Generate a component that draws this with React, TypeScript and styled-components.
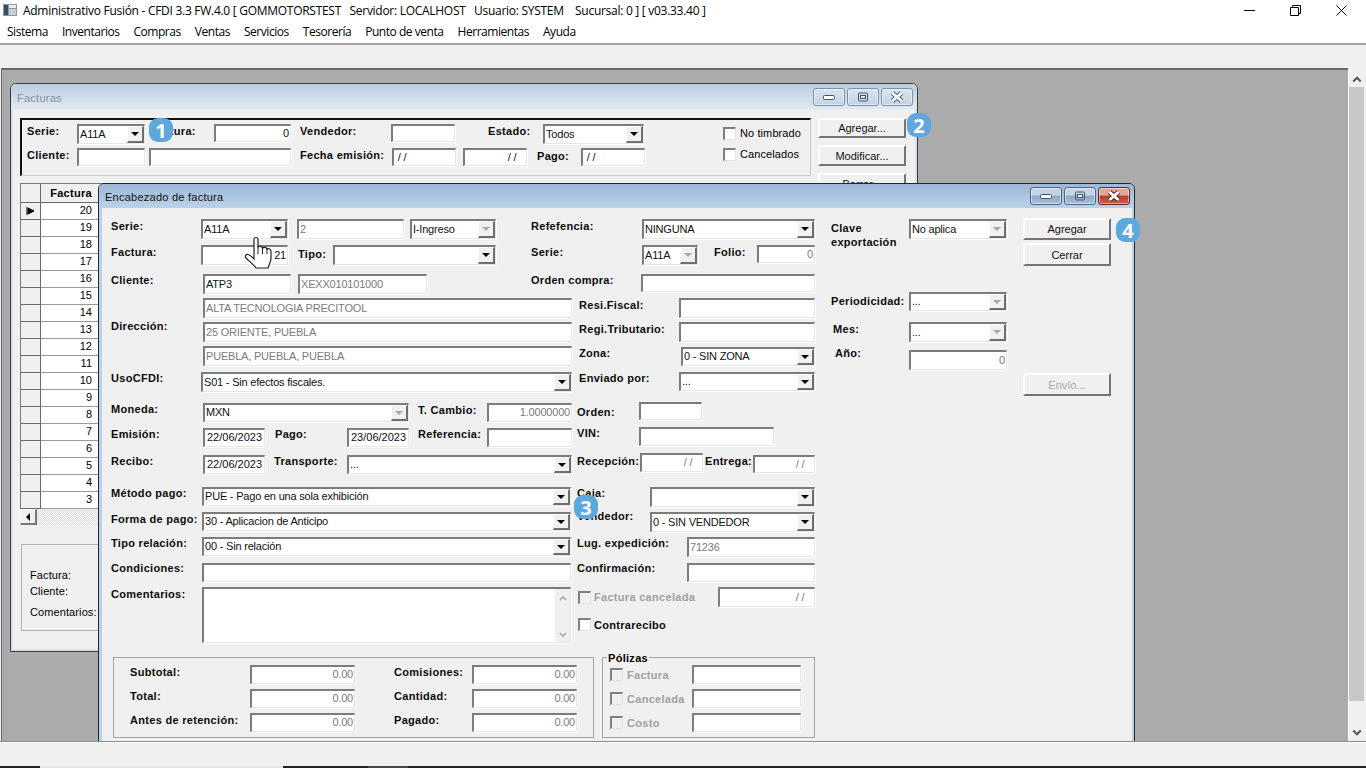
import React from "react";
import styled, { createGlobalStyle } from "styled-components";

const Global = createGlobalStyle`
  html, body { margin: 0; padding: 0; overflow: hidden; background: #f0f0f0; }
  * { box-sizing: border-box; }
`;

const Screen = styled.div`
  position: relative;
  width: 1366px;
  height: 768px;
  display: flex;
  flex-direction: column;
  overflow: hidden;
  background: #f0f0f0;
  font-family: "Liberation Sans", Arial, sans-serif;
  color: #000;
`;

const AppTitle = styled.div`
  height: 22px;
  flex: none;
  background: #fff;
  display: flex;
  align-items: center;
  padding: 0 2px 2px 3px;
  font: 12px "Open Sans", sans-serif;
  white-space: pre;
`;

const AppTitleText = styled.span`
  margin-left: 6px;
  flex: 1;
  letter-spacing: -0.28px;
`;

const SysButton = styled.div`
  width: 46px;
  display: flex;
  justify-content: center;
`;

const MenuBar = styled.div`
  height: 21px;
  flex: none;
  background: #fff;
  display: flex;
  gap: 14px;
  padding: 1px 0 0 7px;
  font: 12px "Open Sans", sans-serif;
  letter-spacing: -0.46px;
`;

const ToolBand = styled.div`
  height: 25px;
  flex: none;
  background: #f0f0f0;
  border-top: 2px solid #a3a3a3;
`;

const Main = styled.div`
  flex: 1;
  display: flex;
  min-height: 0;
`;

const Workspace = styled.div`
  position: relative;
  flex: 1;
  margin-left: 1px;
  border-top: 2px solid #696969;
  border-left: 1px solid #696969;
  background: #ababab;
  overflow: hidden;
`;

const VScroll = styled.div`
  width: 18px;
  flex: none;
  padding: 0 2px 0 1px;
  border-top: 2px solid #f0f0f0;
  display: flex;
  flex-direction: column;
  align-items: stretch;
  background: #f0f0f0;
  box-shadow: inset 1px 0 0 #fff;
`;

const VScrollArrow = styled.div<{ $end?: boolean }>`
  height: 17px;
  margin-top: ${(p) => (p.$end ? "auto" : "0")};
  display: flex;
  align-items: center;
  justify-content: center;
  color: #555;
`;

const VScrollThumb = styled.div`
  height: 614px;
  background: #c8c8c8;
`;

const StatusBar = styled.div`
  height: 25px;
  flex: none;
  background: #f0f0f0;
  border-top: 1px solid #8c8c8c;
  box-shadow: inset 0 1px 0 #fff;
`;

const TaskStrip = styled.div`
  height: 2px;
  flex: none;
  display: flex;
  background: #222;
`;

const TaskSegment = styled.div<{ $w: number; $c: string }>`
  width: ${(p) => p.$w}px;
  background: ${(p) => p.$c};
`;

/* ventanas MDI: sobre el area de trabajo */
const Win = styled.div<{ $x: number; $y: number; $w: number; $h: number; $active?: boolean }>`
  position: absolute;
  left: ${(p) => p.$x}px;
  top: ${(p) => p.$y}px;
  width: ${(p) => p.$w}px;
  height: ${(p) => p.$h}px;
  border: 1px solid ${(p) => (p.$active ? "#1d2a38" : "#3c3c3c")};
  border-radius: 6px 6px 0 0;
  padding: 0 2px 2px ${(p) => (p.$active ? 3 : 2)}px;
  display: flex;
  flex-direction: column;
  background: ${(p) => (p.$active ? "#b9d1e8" : "#d3e1ef")};
`;

const WinTitle = styled.div<{ $active?: boolean }>`
  height: ${(p) => (p.$active ? 24 : 25)}px;
  flex: none;
  margin: 0 -2px 0 ${(p) => (p.$active ? -3 : -2)}px;
  padding: 0 4px 0 6px;
  border-radius: 5px 5px 0 0;
  display: flex;
  align-items: center;
  font-size: 11px;
  letter-spacing: 0.25px;
  color: ${(p) => (p.$active ? "#111" : "#8b9199")};
  background: ${(p) =>
    p.$active
      ? "linear-gradient(#9db8d6, #bad1e8)"
      : "linear-gradient(#bccddf, #dfe9f3)"};
`;

const WinTitleText = styled.span`
  flex: 1;
  margin-top: 2px;
`;

const CaptionGroup = styled.div`
  display: flex;
  gap: 2px;
`;

const CaptionBtn = styled.div<{ $kind: "plain" | "plainActive" | "closeActive" }>`
  width: 32px;
  height: 18px;
  border: 1px solid ${(p) => (p.$kind === "plain" ? "#7f91a8" : p.$kind === "plainActive" ? "#52657f" : "#6e2a22")};
  border-radius: 3px;
  box-shadow: inset 0 0 0 1px rgba(255, 255, 255, 0.45);
  display: flex;
  align-items: center;
  justify-content: center;
  background: ${(p) =>
    p.$kind === "plain"
      ? "linear-gradient(#d9e4f0, #c3d2e3)"
      : p.$kind === "plainActive"
      ? "linear-gradient(#c3d4e6 0 45%, #8fa9c6 50%, #a8c0da)"
      : "linear-gradient(#dca99d 0 45%, #b73d2b 50%, #c5604d)"};
`;

const WinClient = styled.div<{ $pad: string }>`
  flex: 1;
  min-height: 0;
  background: #f0f0f0;
  padding: ${(p) => p.$pad};
  overflow: hidden;
`;

/* controles */
const Lbl = styled.span<{ $w?: number; $ml?: number; $dy?: number; $off?: boolean }>`
  flex: none;
  display: block;
  width: ${(p) => (p.$w ? `${p.$w}px` : "auto")};
  margin-left: ${(p) => p.$ml ?? 0}px;
  margin-top: ${(p) => p.$dy ?? 0}px;
  font-size: 11px;
  font-weight: bold;
  line-height: 14px;
  letter-spacing: 0.3px;
  white-space: pre;
  color: ${(p) => (p.$off ? "#a0a0a0" : "#0c0c0c")};
`;

const Plain = styled.span<{ $dy?: number; $ml?: number }>`
  display: block;
  margin-left: ${(p) => p.$ml ?? 0}px;
  margin-top: ${(p) => p.$dy ?? 0}px;
  font-size: 11px;
  line-height: 14px;
  letter-spacing: 0.1px;
  white-space: nowrap;
`;

const Field = styled.div<{ $w: number; $h?: number; $ml?: number; $right?: boolean; $dim?: boolean; $dy?: number; $date?: boolean }>`
  flex: none;
  width: ${(p) => p.$w}px;
  height: ${(p) => p.$h ?? 19}px;
  margin-left: ${(p) => p.$ml ?? 0}px;
  margin-top: ${(p) => p.$dy ?? 0}px;
  background: #fff;
  border-top: 2px solid #7c7c7c;
  border-left: 2px solid #7c7c7c;
  border-right: 1px solid #e6e6e6;
  border-bottom: 1px solid #e6e6e6;
  box-shadow: 1px 1px 0 #fff;
  padding: 0 ${(p) => (p.$date ? 0 : 1)}px 2px ${(p) => (p.$date ? 2 : 1)}px;
  overflow: hidden;
  display: flex;
  align-items: center;
  justify-content: ${(p) => (p.$right ? "flex-end" : "flex-start")};
  font-size: 11px;
  letter-spacing: ${(p) => (p.$date ? 0 : -0.2)}px;
  white-space: nowrap;
  color: ${(p) => (p.$dim ? "#7b7b7b" : "#111")};
`;

const ComboText = styled.span`
  flex: 1;
  overflow: hidden;
`;

const ComboBtn = styled.span<{ $off?: boolean }>`
  flex: none;
  width: 17px;
  align-self: stretch;
  margin: 0 -1px -2px 0;
  background: #f0f0f0;
  border-top: 1px solid #fff;
  border-left: 1px solid #fff;
  border-right: 2px solid #6f6f6f;
  border-bottom: 2px solid #6f6f6f;
  display: flex;
  align-items: center;
  justify-content: center;
  &::after {
    content: "";
    border-style: solid;
    border-width: 4px 4px 0;
    border-color: ${(p) => (p.$off ? "#a8a8a8" : "#000")} transparent transparent;
  }
`;

type ComboProps = { w: number; h?: number; ml?: number; off?: boolean; dy?: number; children?: React.ReactNode };

const Combo = ({ w, h, ml, off, dy, children }: ComboProps) => (
  <Field $w={w} $h={h ?? 20} $ml={ml} $dy={dy}>
    <ComboText>{children}</ComboText>
    <ComboBtn $off={off} />
  </Field>
);

const Btn = styled.div<{ $h: number; $mt?: number; $off?: boolean }>`
  width: 88px;
  height: ${(p) => p.$h}px;
  margin-top: ${(p) => p.$mt ?? 0}px;
  flex: none;
  background: #f0f0f0;
  border-top: 2px solid #fff;
  border-left: 2px solid #fff;
  border-right: 2px solid #747474;
  border-bottom: 2px solid #747474;
  display: flex;
  align-items: center;
  justify-content: center;
  font-size: 11px;
  color: ${(p) => (p.$off ? "#a6a6a6" : "#111")};
`;

const Check = styled.span<{ $off?: boolean; $ml?: number; $dy?: number }>`
  flex: none;
  width: 13px;
  height: 13px;
  margin-left: ${(p) => p.$ml ?? 0}px;
  margin-top: ${(p) => p.$dy ?? 0}px;
  background: ${(p) => (p.$off ? "#f0f0f0" : "#fff")};
  border-top: 2px solid #808080;
  border-left: 2px solid #808080;
  border-right: 1px solid #e4e4e4;
  border-bottom: 1px solid #e4e4e4;
`;

const Row = styled.div<{ $mt?: number }>`
  display: flex;
  align-items: flex-start;
  margin-top: ${(p) => p.$mt ?? 0}px;
`;

const Col = styled.div<{ $w?: number; $ml?: number; $mt?: number; $gap?: number }>`
  display: flex;
  flex-direction: column;
  flex: none;
  width: ${(p) => (p.$w ? `${p.$w}px` : "auto")};
  margin-left: ${(p) => p.$ml ?? 0}px;
  margin-top: ${(p) => p.$mt ?? 0}px;
  gap: ${(p) => p.$gap ?? 0}px;
`;

/* Facturas */
const FacturasTop = styled.div`
  display: flex;
  align-items: flex-start;
  height: 58px;
`;

const FilterPanel = styled.div`
  width: 791px;
  height: 58px;
  flex: none;
  display: flex;
  padding: 4px 0 0 5px;
  border-top: 2px solid #111;
  border-left: 2px solid #111;
  border-right: 1px solid #c8c8c8;
  border-bottom: 1px solid #c8c8c8;
`;

const CheckRow = styled.div<{ $mt?: number }>`
  display: flex;
  align-items: center;
  gap: 4px;
  margin-top: ${(p) => p.$mt ?? 0}px;
`;

const DataGrid = styled.div`
  margin-top: 7px;
  width: 90px;
  border-top: 1px solid #7a7a7a;
  border-left: 1px solid #7a7a7a;
`;

const GridRow = styled.div`
  display: flex;
  height: 17px;
`;

const GridHeadRow = styled(GridRow)`
  height: 19px;
`;

const SelectorCell = styled.div`
  width: 20px;
  flex: none;
  background: #f0f0f0;
  border-right: 1px solid #6a6a6a;
  border-bottom: 1px solid #6a6a6a;
  display: flex;
  align-items: center;
  justify-content: center;
`;

const HeadCell = styled.div`
  flex: 1;
  background: #f0f0f0;
  border-bottom: 1px solid #6a6a6a;
  padding-right: 18px;
  text-align: right;
  font-size: 11px;
  font-weight: bold;
  line-height: 18px;
  letter-spacing: 0.3px;
`;

const NumCell = styled.div`
  flex: 1;
  background: #fff;
  border-bottom: 1px solid #9a9a9a;
  padding-right: 18px;
  text-align: right;
  font-size: 11px;
  line-height: 15px;
`;

const GridScroll = styled.div`
  height: 16px;
  display: flex;
  width: 90px;
  background: repeating-conic-gradient(#f4f4f4 0 25%, #dfdfdf 0 50%) 0 0 / 2px 2px;
`;

const GridArrow = styled.div`
  width: 17px;
  background: #f0f0f0;
  border-right: 2px solid #777;
  border-bottom: 2px solid #777;
  border-top: 1px solid #fff;
  border-left: 1px solid #fff;
  display: flex;
  align-items: center;
  justify-content: center;
  &::after {
    content: "";
    border-style: solid;
    border-width: 4px 4px 4px 0;
    border-color: transparent #000 transparent transparent;
  }
`;

const DetailPanel = styled.div`
  margin: 19px 0 0 1px;
  width: 400px;
  height: 87px;
  padding: 23px 0 0 8px;
  border: 1px solid #b4b4b4;
`;

/* Encabezado */
const TwoCols = styled.div<{ $mt?: number }>`
  display: flex;
  align-items: flex-start;
  margin-top: ${(p) => p.$mt ?? 0}px;
`;

const MemoScroll = styled.span`
  align-self: stretch;
  width: 15px;
  margin: 0 -1px -2px auto;
  background: #f0f0f0;
  display: flex;
  flex-direction: column;
  justify-content: space-between;
  align-items: center;
  padding: 5px 0 3px;
  color: #a8a8a8;
`;

const TotalsPanel = styled.div`
  width: 481px;
  height: 81px;
  margin-left: 2px;
  padding: 7px 0 0 16px;
  border: 1px solid #a4a4a4;
  flex: none;
`;

const PolizasPanel = styled.div`
  position: relative;
  width: 213px;
  height: 81px;
  margin-left: 8px;
  padding: 7px 0 0 7px;
  border: 1px solid #a4a4a4;
  flex: none;
`;

const PolizasLegend = styled.span`
  position: absolute;
  left: 4px;
  top: -7px;
  padding: 0 1px;
  background: #f0f0f0;
  font-size: 11px;
  line-height: 14px;
  font-weight: bold;
  letter-spacing: 0.3px;
`;

/* marcadores del tutorial y puntero */
const Badge = styled.div<{ $x: number; $y: number }>`
  position: absolute;
  left: ${(p) => p.$x}px;
  top: ${(p) => p.$y}px;
  width: 24px;
  height: 24px;
  border-radius: 9px;
  background: #5fa8dd;
  color: #fff;
  display: flex;
  align-items: center;
  justify-content: center;
  font: bold 20px "Open Sans", sans-serif;
`;

const HandCursor = styled.svg`
  position: absolute;
  left: 244px;
  top: 236px;
`;

const Chevron = ({ up, size = 8 }: { up?: boolean; size?: number }) => (
  <svg width={size} height={size} viewBox="0 0 8 8">
    <path d={up ? "M1 6 L4 3 L7 6" : "M1 2 L4 5 L7 2"} fill="none" stroke="currentColor" strokeWidth="1.6" />
  </svg>
);

const MinGlyph = () => (
  <svg width="14" height="8" viewBox="0 0 14 8">
    <rect x="1.5" y="2.5" width="11" height="4" rx="1" fill="#fff" stroke="#48566a" />
  </svg>
);

const MaxGlyph = () => (
  <svg width="12" height="10" viewBox="0 0 12 10">
    <rect x="1.5" y="1" width="9" height="8" rx="1" fill="none" stroke="#48566a" strokeWidth="1" />
    <rect x="3.5" y="3.5" width="5" height="3" fill="#eef3f9" stroke="#48566a" strokeWidth="1" />
  </svg>
);

const CloseGlyph = ({ tone }: { tone: string }) => (
  <svg width="16" height="12" viewBox="0 0 16 12">
    <path d="M3.5 2 L12.5 10 M12.5 2 L3.5 10" stroke={tone} strokeWidth="5" />
    <path d="M3.5 2 L12.5 10 M12.5 2 L3.5 10" stroke="#fff" strokeWidth="3" />
  </svg>
);

const Caption = ({ active }: { active?: boolean }) => (
  <CaptionGroup>
    <CaptionBtn $kind={active ? "plainActive" : "plain"}><MinGlyph /></CaptionBtn>
    <CaptionBtn $kind={active ? "plainActive" : "plain"}><MaxGlyph /></CaptionBtn>
    <CaptionBtn $kind={active ? "closeActive" : "plain"}><CloseGlyph tone={active ? "#5a1e16" : "#53627a"} /></CaptionBtn>
  </CaptionGroup>
);

const facturas = [20, 19, 18, 17, 16, 15, 14, 13, 12, 11, 10, 9, 8, 7, 6, 5, 4, 3];

const FacturasWindow = () => (
  <Win $x={8} $y={13} $w={908} $h={569}>
    <WinTitle>
      <WinTitleText>Facturas</WinTitleText>
      <Caption />
    </WinTitle>
    <WinClient $pad="9px 0 0 7px">
      <FacturasTop>
        <FilterPanel>
          <Col>
            <Row>
              <Lbl $w={50}>Serie:</Lbl>
              <Combo w={68}>A11A</Combo>
              <Lbl $w={64} $ml={5}>Factura:</Lbl>
              <Field $w={77} $h={18} $right>0</Field>
              <Lbl $w={91} $ml={9}>Vendedor:</Lbl>
              <Field $w={64} $h={18} />
              <Lbl $w={55} $ml={33}>Estado:</Lbl>
              <Combo w={101}>Todos</Combo>
            </Row>
            <Row $mt={4}>
              <Lbl $w={50}>Cliente:</Lbl>
              <Field $w={68} $h={18} />
              <Field $w={142} $h={18} $ml={4} />
              <Lbl $w={92} $ml={9}>Fecha emisión:</Lbl>
              <Field $w={64} $h={18}>&nbsp;/ /</Field>
              <Field $w={64} $h={18} $ml={7} $right>/ /&nbsp;&nbsp;&nbsp;</Field>
              <Lbl $w={44} $ml={10} $dy={1}>Pago:</Lbl>
              <Field $w={64} $h={18}>&nbsp;/ /</Field>
            </Row>
          </Col>
          <Col $ml={78} $mt={2}>
            <CheckRow>
              <Check />
              <Plain>No timbrado</Plain>
            </CheckRow>
            <CheckRow $mt={7}>
              <Check />
              <Plain>Cancelados</Plain>
            </CheckRow>
          </Col>
        </FilterPanel>
        <Col $ml={7} $gap={7}>
          <Btn $h={20}>Agregar...</Btn>
          <Btn $h={21}>Modificar...</Btn>
          <Btn $h={21}>Borrar...</Btn>
        </Col>
      </FacturasTop>
      <DataGrid>
        <GridHeadRow>
          <SelectorCell />
          <HeadCell>Factura</HeadCell>
        </GridHeadRow>
        {facturas.map((n, i) => (
          <GridRow key={n}>
            <SelectorCell>
              {i === 0 && (
                <svg width="10" height="8" viewBox="0 0 10 8">
                  <path d="M1 0 V8 M2 1 L8 4 L2 7 Z" stroke="#000" fill="#000" />
                </svg>
              )}
            </SelectorCell>
            <NumCell>{n}</NumCell>
          </GridRow>
        ))}
      </DataGrid>
      <GridScroll>
        <GridArrow />
      </GridScroll>
      <DetailPanel>
        <Plain>Factura:</Plain>
        <Plain $dy={2}>Cliente:</Plain>
        <Plain $dy={7}>Comentarios:</Plain>
      </DetailPanel>
    </WinClient>
  </Win>
);

const EncabezadoWindow = () => (
  <Win $x={96} $y={113} $w={1037} $h={600} $active>
    <WinTitle $active>
      <WinTitleText>Encabezado de factura</WinTitleText>
      <Caption active />
    </WinTitle>
    <WinClient $pad="11px 0 0 9px">
      <Row>
        <Col $w={704}>
          <TwoCols>
            <Col $w={420}>
              <Row>
                <Lbl $w={90}>Serie:</Lbl>
                <Combo w={87}>A11A</Combo>
                <Field $w={107} $h={20} $ml={9} $dim>2</Field>
                <Combo w={86} ml={6} off>I-Ingreso</Combo>
              </Row>
              <Row $mt={6}>
                <Lbl $w={90}>Factura:</Lbl>
                <Field $w={87} $h={20} $right>21</Field>
                <Lbl $w={35} $ml={10} $dy={2}>Tipo:</Lbl>
                <Combo w={163}></Combo>
              </Row>
              <Row $mt={9}>
                <Lbl $w={92} $dy={-1}>Cliente:</Lbl>
                <Field $w={88} $h={20}>ATP3</Field>
                <Field $w={129} $h={20} $ml={7} $dim>XEXX010101000</Field>
              </Row>
            </Col>
            <Col $w={284}>
              <Row>
                <Lbl $w={111}>Refefencia:</Lbl>
                <Combo w={173}>NINGUNA</Combo>
              </Row>
              <Row $mt={6}>
                <Lbl $w={111}>Serie:</Lbl>
                <Combo w={56} off>A11A</Combo>
                <Lbl $w={43} $ml={16}>Folio:</Lbl>
                <Field $w={58} $h={18} $right $dim>0</Field>
              </Row>
              <Row $mt={9}>
                <Lbl $w={110} $dy={-1}>Orden compra:</Lbl>
                <Field $w={174} $h={18} />
              </Row>
            </Col>
          </TwoCols>
          <TwoCols $mt={4}>
            <Col $w={461}>
              <Row>
                <Lbl $w={92} $dy={21}>Dirección:</Lbl>
                <Col $gap={4}>
                  <Field $w={369} $h={20} $dim>ALTA TECNOLOGIA PRECITOOL</Field>
                  <Field $w={369} $h={20} $dim>25 ORIENTE, PUEBLA</Field>
                  <Field $w={369} $h={20} $dim>PUEBLA, PUEBLA, PUEBLA</Field>
                </Col>
              </Row>
              <Row $mt={6}>
                <Lbl $w={90} $dy={-1}>UsoCFDI:</Lbl>
                <Combo w={371}>S01 - Sin efectos fiscales.</Combo>
              </Row>
              <Row $mt={11}>
                <Lbl $w={92} $dy={-1}>Moneda:</Lbl>
                <Combo w={206} h={19} off>MXN</Combo>
                <Lbl $w={69} $ml={9}>T. Cambio:</Lbl>
                <Field $w={85} $right $dim>1.0000000</Field>
              </Row>
              <Row $mt={6}>
                <Lbl $w={92} $dy={-1}>Emisión:</Lbl>
                <Field $w={62} $date>22/06/2023</Field>
                <Lbl $w={72} $ml={10} $dy={-1}>Pago:</Lbl>
                <Field $w={62} $date>23/06/2023</Field>
                <Lbl $w={69} $ml={9} $dy={-1}>Referencia:</Lbl>
                <Field $w={85} />
              </Row>
              <Row $mt={8}>
                <Lbl $w={92} $dy={-1}>Recibo:</Lbl>
                <Field $w={62} $date>22/06/2023</Field>
                <Lbl $w={73} $ml={9} $dy={-1}>Transporte:</Lbl>
                <Combo w={225} h={19}>...</Combo>
              </Row>
              <Row $mt={13}>
                <Lbl $w={91} $dy={-1}>Método pago:</Lbl>
                <Combo w={369} h={19}>PUE - Pago en una sola exhibición</Combo>
              </Row>
              <Row $mt={6}>
                <Lbl $w={91}>Forma de pago:</Lbl>
                <Combo w={369} h={19}>30 - Aplicacion de Anticipo</Combo>
              </Row>
              <Row $mt={6}>
                <Lbl $w={91} $dy={-1}>Tipo relación:</Lbl>
                <Combo w={369} h={19}>00 - Sin relación</Combo>
              </Row>
              <Row $mt={7}>
                <Lbl $w={91} $dy={-2}>Condiciones:</Lbl>
                <Field $w={369} />
              </Row>
              <Row $mt={5}>
                <Lbl $w={91}>Comentarios:</Lbl>
                <Field $w={369} $h={56}>
                  <MemoScroll>
                    <Chevron up />
                    <Chevron />
                  </MemoScroll>
                </Field>
              </Row>
            </Col>
            <Col $w={238} $ml={5}>
              <Row>
                <Lbl $w={100} $ml={2}>Resi.Fiscal:</Lbl>
                <Field $w={136} $h={20} />
              </Row>
              <Row $mt={4}>
                <Lbl $w={100} $ml={2}>Regi.Tributario:</Lbl>
                <Field $w={136} $h={20} />
              </Row>
              <Row $mt={5}>
                <Lbl $w={102} $ml={2} $dy={-1}>Zona:</Lbl>
                <Combo w={134} h={19}>0 - SIN ZONA</Combo>
              </Row>
              <Row $mt={6}>
                <Lbl $w={100} $ml={2} $dy={-1}>Enviado por:</Lbl>
                <Combo w={136} h={19}>...</Combo>
              </Row>
              <Row $mt={11}>
                <Lbl $w={62} $dy={3}>Orden:</Lbl>
                <Field $w={63} $h={18} />
              </Row>
              <Row $mt={7}>
                <Lbl $w={62} $dy={-1}>VIN:</Lbl>
                <Field $w={135} />
              </Row>
              <Row $mt={7}>
                <Lbl $w={63} $dy={1}>Recepción:</Lbl>
                <Field $w={63} $right $dim>/ /&nbsp;&nbsp;&nbsp;</Field>
                <Lbl $w={48} $ml={2} $dy={1}>Entrega:</Lbl>
                <Field $w={62} $h={18} $dy={2} $right $dim>/ /&nbsp;&nbsp;&nbsp;</Field>
              </Row>
              <Row $mt={14}>
                <Lbl $w={73} $dy={-1}>Caja:</Lbl>
                <Combo w={165}></Combo>
              </Row>
              <Row $mt={5}>
                <Lbl $w={73} $dy={-3}>Vendedor:</Lbl>
                <Combo w={165}>0 - SIN VENDEDOR</Combo>
              </Row>
              <Row $mt={5}>
                <Lbl $w={110} $dy={-1}>Lug. expedición:</Lbl>
                <Field $w={128} $h={20} $dim>71236</Field>
              </Row>
              <Row $mt={6}>
                <Lbl $w={110} $dy={-2}>Confirmación:</Lbl>
                <Field $w={128} />
              </Row>
              <Row $mt={5}>
                <Check $off $ml={1} $dy={4} />
                <Lbl $w={124} $ml={3} $dy={3} $off>Factura cancelada</Lbl>
                <Field $w={97} $h={20} $right $dim>/ /&nbsp;&nbsp;&nbsp;</Field>
              </Row>
              <Row $mt={11}>
                <Check $ml={1} />
                <Lbl $ml={3}>Contrarecibo</Lbl>
              </Row>
            </Col>
          </TwoCols>
          <TwoCols $mt={14}>
            <TotalsPanel>
              <Row>
                <Lbl $w={120}>Subtotal:</Lbl>
                <Field $w={105} $right $dim>0.00</Field>
                <Lbl $w={78} $ml={39}>Comisiones:</Lbl>
                <Field $w={105} $right $dim>0.00</Field>
              </Row>
              <Row $mt={5}>
                <Lbl $w={120}>Total:</Lbl>
                <Field $w={105} $right $dim>0.00</Field>
                <Lbl $w={78} $ml={39}>Cantidad:</Lbl>
                <Field $w={105} $right $dim>0.00</Field>
              </Row>
              <Row $mt={5}>
                <Lbl $w={120}>Antes de retención:</Lbl>
                <Field $w={105} $right $dim>0.00</Field>
                <Lbl $w={78} $ml={39}>Pagado:</Lbl>
                <Field $w={105} $right $dim>0.00</Field>
              </Row>
            </TotalsPanel>
            <PolizasPanel>
              <PolizasLegend>Pólizas</PolizasLegend>
              <Row>
                <Check $off $dy={3} />
                <Lbl $w={65} $ml={4} $dy={3} $off>Factura</Lbl>
                <Field $w={109} />
              </Row>
              <Row $mt={5}>
                <Check $off $dy={3} />
                <Lbl $w={65} $ml={4} $dy={3} $off>Cancelada</Lbl>
                <Field $w={109} />
              </Row>
              <Row $mt={5}>
                <Check $off $dy={3} />
                <Lbl $w={65} $ml={4} $dy={3} $off>Costo</Lbl>
                <Field $w={109} />
              </Row>
            </PolizasPanel>
          </TwoCols>
        </Col>
        <Col $w={176} $ml={16}>
          <Row>
            <Lbl $w={78} $dy={2}>{"Clave\nexportación"}</Lbl>
            <Combo w={98} off>No aplica</Combo>
          </Row>
          <Row $mt={43}>
            <Lbl $w={78} $dy={2}>Periodicidad:</Lbl>
            <Combo w={98} h={19} off>...</Combo>
          </Row>
          <Row $mt={11}>
            <Lbl $w={76} $ml={2}>Mes:</Lbl>
            <Combo w={98} off>...</Combo>
          </Row>
          <Row $mt={8}>
            <Lbl $w={74} $ml={4} $dy={-4}>Año:</Lbl>
            <Field $w={98} $h={20} $right $dim>0</Field>
          </Row>
        </Col>
        <Col $ml={16} $mt={-1}>
          <Btn $h={22}>Agregar</Btn>
          <Btn $h={23} $mt={3}>Cerrar</Btn>
          <Btn $h={23} $mt={107} $off>Envío...</Btn>
        </Col>
      </Row>
    </WinClient>
  </Win>
);

export default function App() {
  return (
    <Screen>
      <Global />
      <AppTitle>
        <svg width="14" height="12" viewBox="0 0 14 12">
          <rect x="0" y="0" width="14" height="12" fill="#8a9aa0" />
          <rect x="1" y="1" width="4" height="10" fill="#33505f" />
          <rect x="6" y="1" width="7" height="3" fill="#e8eef0" />
          <rect x="6" y="5" width="7" height="6" fill="#c4d0d4" />
        </svg>
        <AppTitleText>
          {"Administrativo Fusión - CFDI 3.3 FW.4.0 [ GOMMOTORSTEST   Servidor: LOCALHOST   Usuario: SYSTEM    Sucursal: 0 ] [ v03.33.40 ]"}
        </AppTitleText>
        <SysButton>
          <svg width="11" height="11" viewBox="0 0 11 11">
            <path d="M0 5.5 H11" stroke="#000" />
          </svg>
        </SysButton>
        <SysButton>
          <svg width="11" height="11" viewBox="0 0 11 11">
            <path d="M0.5 2.5 H8.5 V10.5 H0.5 Z M2.5 2.5 V0.5 H10.5 V8.5 H8.5" fill="none" stroke="#000" />
          </svg>
        </SysButton>
        <SysButton>
          <svg width="11" height="11" viewBox="0 0 11 11">
            <path d="M0.5 0.5 L10.5 10.5 M10.5 0.5 L0.5 10.5" stroke="#000" />
          </svg>
        </SysButton>
      </AppTitle>
      <MenuBar>
        <span>Sistema</span>
        <span>Inventarios</span>
        <span>Compras</span>
        <span>Ventas</span>
        <span>Servicios</span>
        <span>Tesorería</span>
        <span>Punto de venta</span>
        <span>Herramientas</span>
        <span>Ayuda</span>
      </MenuBar>
      <ToolBand />
      <Main>
        <Workspace>
          <FacturasWindow />
          <EncabezadoWindow />
        </Workspace>
        <VScroll>
          <VScrollArrow><Chevron up size={10} /></VScrollArrow>
          <VScrollThumb />
          <VScrollArrow $end><Chevron size={10} /></VScrollArrow>
        </VScroll>
      </Main>
      <StatusBar />
      <TaskStrip>
        <TaskSegment $w={40} $c="#222" />
        <TaskSegment $w={243} $c="#e4e4e4" />
        <TaskSegment $w={85} $c="#222" />
        <TaskSegment $w={40} $c="#444" />
      </TaskStrip>
      <Badge $x={149} $y={118}>1</Badge>
      <Badge $x={907} $y={113}>2</Badge>
      <Badge $x={574} $y={495}>3</Badge>
      <Badge $x={1116} $y={218}>4</Badge>
      <HandCursor width="30" height="34" viewBox="0 0 30 34">
        <path
          d="M10 19 V3.5 C10 0.8 14 0.8 14 3.5 V11 C15.5 9.8 18 10 18.5 12 C20 10.8 22.5 11.2 23 13 C24.5 12.2 27 13 27 15.5 V22 C27 26 25 28 24 32 H12 C10 29 6 26 2 22 C0.5 20 2 18 4 18.5 C6 19 8 21 10 23 Z"
          fill="#fff"
          stroke="#222"
          strokeWidth="1.2"
        />
        <path d="M14 11 V18 M18.5 12 V18 M23 13 V18" fill="none" stroke="#222" strokeWidth="1" />
      </HandCursor>
    </Screen>
  );
}
